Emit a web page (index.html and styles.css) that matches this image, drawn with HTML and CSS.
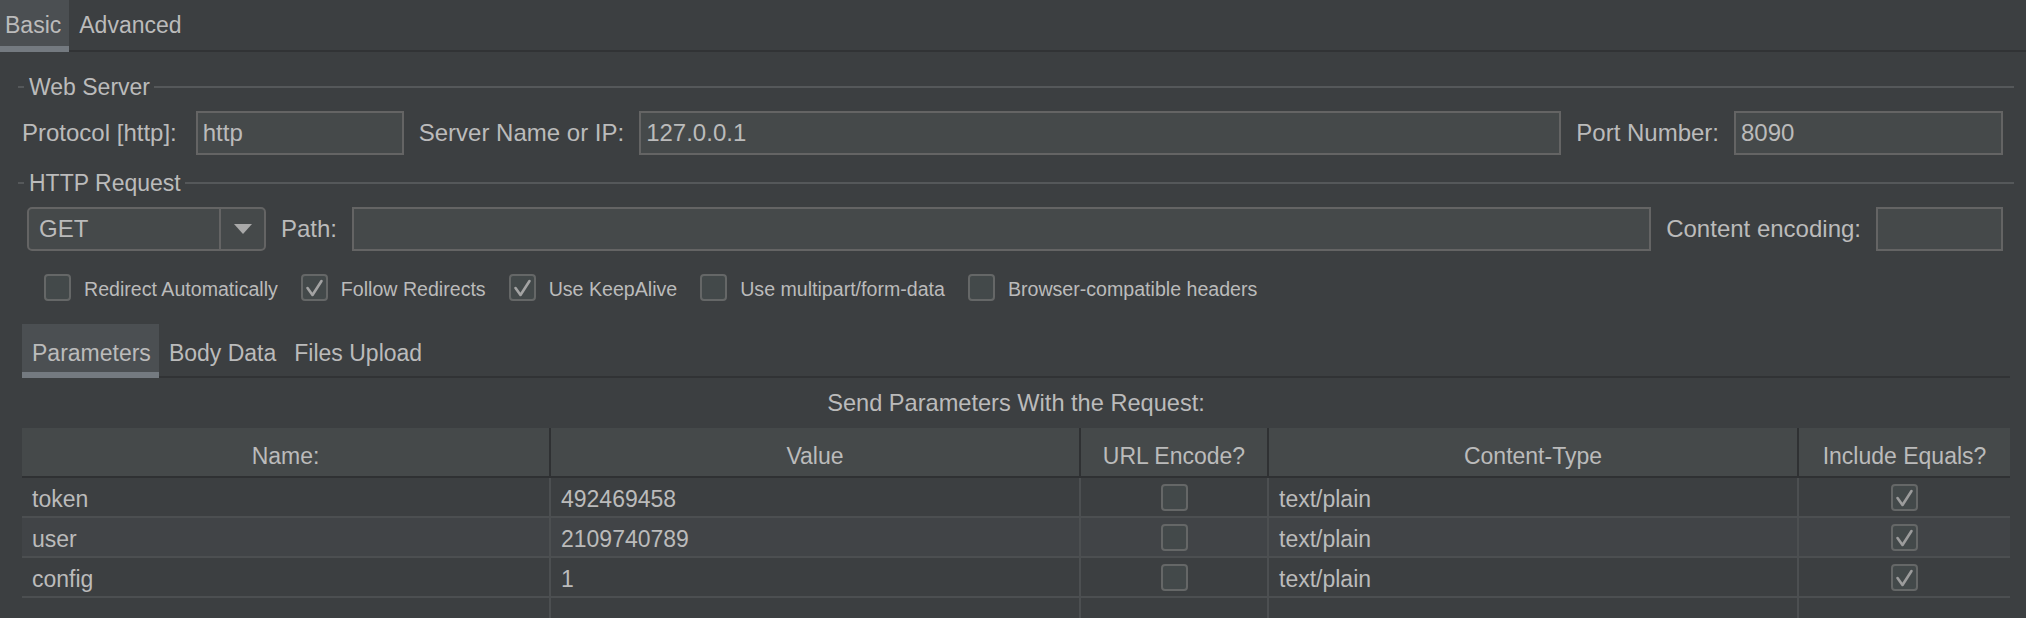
FILE: index.html
```html
<!DOCTYPE html>
<html>
<head>
<meta charset="utf-8">
<title>HTTP Request</title>
<link rel="stylesheet" href="styles.css">
</head>
<body>
<div class="tabbar top">
  <div class="tab active first">Basic</div>
  <div class="tab">Advanced</div>
</div>

<section class="group">
  <div class="group-title"><span>Web Server</span></div>
  <div class="form-row">
    <span class="lbl lbl-proto">Protocol [http]:</span>
    <div class="field w-proto">http</div>
    <span class="lbl">Server Name or IP:</span>
    <div class="field grow">127.0.0.1</div>
    <span class="lbl">Port Number:</span>
    <div class="field w-port">8090</div>
  </div>
</section>

<section class="group second">
  <div class="group-title"><span>HTTP Request</span></div>
  <div class="form-row row-req">
    <div class="combo">
      <div class="combo-value">GET</div>
      <div class="combo-arrow"><svg width="18" height="10" viewBox="0 0 18 10"><polygon points="0,0 18,0 9,10" fill="#a9a9a9"/></svg></div>
    </div>
    <span class="lbl">Path:</span>
    <div class="field grow"></div>
    <span class="lbl">Content encoding:</span>
    <div class="field w-enc"></div>
  </div>
  <div class="checks">
    <div class="check"><span class="cb"></span><span class="ctext">Redirect Automatically</span></div>
    <div class="check"><span class="cb"><svg width="23" height="23" viewBox="0 0 23 23"><path d="M4.5 12 L9.5 19 L18.5 5" fill="none" stroke="#a3a3a3" stroke-width="2.6" stroke-linejoin="round" stroke-linecap="round"/></svg></span><span class="ctext">Follow Redirects</span></div>
    <div class="check"><span class="cb"><svg width="23" height="23" viewBox="0 0 23 23"><path d="M4.5 12 L9.5 19 L18.5 5" fill="none" stroke="#a3a3a3" stroke-width="2.6" stroke-linejoin="round" stroke-linecap="round"/></svg></span><span class="ctext">Use KeepAlive</span></div>
    <div class="check"><span class="cb"></span><span class="ctext">Use multipart/form-data</span></div>
    <div class="check"><span class="cb"></span><span class="ctext">Browser-compatible headers</span></div>
  </div>
</section>

<div class="tabbar sub">
  <div class="tab active">Parameters</div>
  <div class="tab">Body Data</div>
  <div class="tab">Files Upload</div>
</div>

<div class="caption">Send Parameters With the Request:</div>

<div class="table">
  <div class="th">Name:</div>
  <div class="th">Value</div>
  <div class="th">URL Encode?</div>
  <div class="th">Content-Type</div>
  <div class="th last">Include Equals?</div>

  <div class="td">token</div>
  <div class="td">492469458</div>
  <div class="td center"><span class="cb"></span></div>
  <div class="td">text/plain</div>
  <div class="td center last"><span class="cb"><svg width="23" height="23" viewBox="0 0 23 23"><path d="M4.5 12 L9.5 19 L18.5 5" fill="none" stroke="#9c9c9c" stroke-width="2.6" stroke-linejoin="round" stroke-linecap="round"/></svg></span></div>

  <div class="td alt">user</div>
  <div class="td alt">2109740789</div>
  <div class="td alt center"><span class="cb"></span></div>
  <div class="td alt">text/plain</div>
  <div class="td alt center last"><span class="cb"><svg width="23" height="23" viewBox="0 0 23 23"><path d="M4.5 12 L9.5 19 L18.5 5" fill="none" stroke="#9c9c9c" stroke-width="2.6" stroke-linejoin="round" stroke-linecap="round"/></svg></span></div>

  <div class="td">config</div>
  <div class="td">1</div>
  <div class="td center"><span class="cb"></span></div>
  <div class="td">text/plain</div>
  <div class="td center last"><span class="cb"><svg width="23" height="23" viewBox="0 0 23 23"><path d="M4.5 12 L9.5 19 L18.5 5" fill="none" stroke="#9c9c9c" stroke-width="2.6" stroke-linejoin="round" stroke-linecap="round"/></svg></span></div>

  <div class="td"></div>
  <div class="td"></div>
  <div class="td"></div>
  <div class="td"></div>
  <div class="td last"></div>
</div>
</body>
</html>
```

FILE: styles.css
```css
html, body {
  margin: 0;
  padding: 0;
  height: 618px;
  overflow: hidden;
  background: #3c3f41;
}

body {
  font-family: "Liberation Sans", Arial, sans-serif;
  font-size: 23px;
  color: #bbbbbb;
}

/* tabs */
.tabbar {
  display: flex;
  height: 52px;
  box-shadow: inset 0 -2px 0 #313335;
}

.tab {
  box-sizing: border-box;
  height: 100%;
  padding: 12px 8px 0 10px;
  line-height: 26px;
  white-space: nowrap;
}

.tab.first {
  padding-left: 5px;
}

.tab.active {
  background: #4b4f52;
  box-shadow: inset 0 -6px 0 #747a80;
}

.tabbar.sub {
  height: 54px;
  margin: 23px 16px 0 22px;
}

.tabbar.sub .tab {
  padding-top: 16px;
}

/* titled groups */
.group-title {
  display: flex;
  align-items: center;
  height: 26px;
  line-height: 26px;
  margin: 22px 12px 0 18px;
}

.group.second .group-title {
  margin-top: 15px;
}

.group-title::before {
  content: "";
  width: 6px;
  height: 2px;
  background: #55585a;
  margin-right: 5px;
}

.group-title::after {
  content: "";
  flex: 1;
  height: 2px;
  background: #55585a;
  margin-left: 4px;
}

/* form rows */
.form-row {
  display: flex;
  align-items: center;
  gap: 15px;
  height: 44px;
  margin-top: 11px;
  padding: 0 23px 0 22px;
  font-size: 24px;
}

.form-row.row-req {
  padding-left: 27px;
}

.lbl {
  white-space: nowrap;
}

.lbl-proto {
  margin-right: 4px;
}

.field {
  box-sizing: border-box;
  height: 44px;
  border: 2px solid #646464;
  background: #45494a;
  padding: 0 5px;
  line-height: 40px;
  white-space: nowrap;
}

.w-proto { width: 208px; }
.w-port { width: 269px; }
.w-enc { width: 127px; }
.grow { flex: 1; }

.combo {
  display: flex;
  box-sizing: border-box;
  width: 239px;
  height: 44px;
  border: 2px solid #646464;
  border-radius: 5px;
  background: #45494a;
}

.combo-value {
  flex: 1;
  padding-left: 10px;
  line-height: 40px;
  border-right: 2px solid #646464;
}

.combo-arrow {
  width: 43px;
  display: flex;
  align-items: center;
  justify-content: center;
}

/* checkboxes */
.checks {
  display: flex;
  align-items: center;
  gap: 23px;
  height: 27px;
  margin-top: 23px;
  padding-left: 44px;
  font-size: 19.6px;
}

.check {
  display: flex;
  align-items: center;
  gap: 13px;
}

.ctext {
  padding-top: 4px;
  white-space: nowrap;
}

.cb {
  box-sizing: border-box;
  width: 27px;
  height: 27px;
  border: 2px solid #656767;
  border-radius: 4px;
  background: #43494a;
  display: flex;
  align-items: center;
  justify-content: center;
  flex: none;
}

/* caption */
.caption {
  margin: 12px 16px 0 22px;
  text-align: center;
  line-height: 26px;
  font-size: 23.6px;
}

/* table */
.table {
  display: grid;
  grid-template-columns: 529px 530px 188px 530px 1fr;
  margin: 12px 16px 0 22px;
}

.th {
  box-sizing: border-box;
  height: 50px;
  padding-top: 8px;
  line-height: 40px;
  text-align: center;
  background: #45494a;
  border-bottom: 2px solid #2f3133;
  border-right: 2px solid #2f3133;
  white-space: nowrap;
}

.td {
  box-sizing: border-box;
  height: 40px;
  padding: 5px 10px 0;
  line-height: 33px;
  border-bottom: 2px solid #4c4f51;
  border-right: 2px solid #4c4f51;
  white-space: nowrap;
}

.td.alt {
  background: #414447;
}

.td.center {
  padding: 0;
  display: flex;
  align-items: center;
  justify-content: center;
}

.th.last, .td.last {
  border-right: none;
}
```
